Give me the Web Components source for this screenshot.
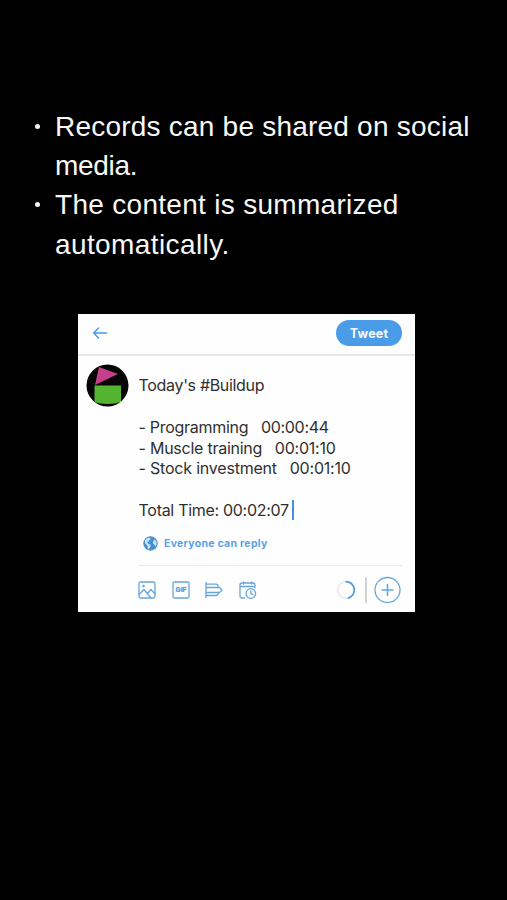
<!DOCTYPE html>
<html lang="en">
<head>
<meta charset="utf-8">
<title>Share records</title>
<style>
    body {
        margin: 0;
        background: #000;
    }
</style>
</head>
<body>
<share-page>
    <note-item slot="notes">
        <text-line ls="0.22">Records can be shared on social</text-line>
        <text-line ls="-0.3">media.</text-line>
    </note-item>
    <note-item slot="notes">
        <text-line ls="0.3">The content is summarized</text-line>
        <text-line ls="0.4">automatically.</text-line>
    </note-item>
    <tweet-card>
        <tweet-button slot="action">Tweet</tweet-button>
        <text-line ls="-0.33">Today's #Buildup</text-line>
        <text-line></text-line>
        <text-line ls="-0.29">- Programming   00:00:44</text-line>
        <text-line ls="-0.25">- Muscle training   00:01:10</text-line>
        <text-line ls="-0.21">- Stock investment   00:01:10</text-line>
        <text-line></text-line>
        <text-line ls="-0.3" caret>Total Time: 00:02:07</text-line>
        <reply-scope slot="scope">Everyone can reply</reply-scope>
        <tweet-tools slot="tools"></tweet-tools>
    </tweet-card>
</share-page>

<script>
class BaseElement extends HTMLElement {
    constructor () {
        super();
        const template = document.createElement('template');
        template.innerHTML = this.constructor.markup;
        this._shadowRoot = this.attachShadow({ mode: 'open' });
        this._shadowRoot.appendChild(template.content.cloneNode(true));
    }
}

class SharePage extends BaseElement {
    static markup = `
        <style>
            :host {
                display: flex;
                flex-direction: column;
                box-sizing: border-box;
                height: 900px;
                padding-top: 107px;
                background: #000;
                overflow: hidden;
            }
            .notes {
                height: 207px;
                box-sizing: border-box;
                padding-left: 33px;
            }
            .card {
                padding-left: 78px;
            }
        </style>
        <div class="notes"><slot name="notes"></slot></div>
        <div class="card"><slot></slot></div>
    `;
}
customElements.define('share-page', SharePage);

class NoteItem extends BaseElement {
    static markup = `
        <style>
            :host {
                display: flex;
                color: #f8f8f8;
                font: 28px/39.2px "Liberation Sans", Arial, sans-serif;
            }
            .dot {
                width: 5px;
                height: 5px;
                margin: 17px 15px 0 2px;
                border-radius: 50%;
                background: #f4f4f4;
                flex: none;
            }
        </style>
        <div class="dot"></div>
        <div><slot></slot></div>
    `;
}
customElements.define('note-item', NoteItem);

// one line of text, "ls" is its letter spacing in px
class TextLine extends BaseElement {
    static markup = `
        <style>
            :host {
                display: flex;
                align-items: center;
                height: 1lh;
                white-space: pre;
            }
            :host([caret])::after {
                content: "";
                width: 2px;
                height: 20px;
                margin-left: 3px;
                background: #4a8fdb;
            }
        </style>
        <span><slot></slot></span>
    `;

    connectedCallback () {
        this.style.letterSpacing = (this.getAttribute('ls') || 0) + 'px';
    }
}
customElements.define('text-line', TextLine);

class TweetCard extends BaseElement {
    static markup = `
        <style>
            :host {
                display: flex;
                flex-direction: column;
                box-sizing: border-box;
                width: 336.5px;
                height: 298px;
                background: #fefefe;
                color: #303030;
                font-family: Inter, "Liberation Sans", sans-serif;
            }
            header {
                display: flex;
                flex: none;
                align-items: center;
                justify-content: space-between;
                box-sizing: border-box;
                height: 42px;
                padding: 0 12.5px 2px 14px;
                border-bottom: 2px solid #e9e9ea;
            }
            main {
                display: flex;
                padding: 8px 13px 0 8px;
            }
            .avatar {
                flex: none;
                width: 43px;
                height: 43px;
            }
            .content {
                flex: 1;
                margin-left: 9px;
            }
            .text {
                padding: 11px 0 0 0.6px;
                font-size: 16px;
                line-height: 20.85px;
            }
        </style>
        <header>
            <svg width="16" height="16" viewBox="0 0 16 16" fill="none" stroke="#4b9be5" stroke-width="1.5" stroke-linecap="round" stroke-linejoin="round">
                <path d="M14.6 8H2M6.6 3L1.6 8l5 5"/>
            </svg>
            <slot name="action"></slot>
        </header>
        <main>
            <svg class="avatar" viewBox="0 0 43 43">
                <circle cx="21.5" cy="21.5" r="21" fill="#050505"/>
                <path d="M13 3L32 10L9 21z" fill="#c43f8c"/>
                <path d="M8.500 21.500H35V38Q29 40 21.500 40T8.500 38z" fill="#55b332"/>
            </svg>
            <div class="content">
                <div class="text"><slot></slot></div>
                <slot name="scope"></slot>
                <slot name="tools"></slot>
            </div>
        </main>
    `;
}
customElements.define('tweet-card', TweetCard);

class TweetButton extends BaseElement {
    static markup = `
        <style>
            :host {
                display: flex;
                align-items: center;
                justify-content: center;
                width: 66px;
                height: 26px;
                border-radius: 13px;
                background: #4a9ce9;
                color: #f5faff;
                font-size: 12.5px;
                font-weight: 700;
                letter-spacing: 0.2px;
            }
        </style>
        <slot></slot>
    `;
}
customElements.define('tweet-button', TweetButton);

class ReplyScope extends BaseElement {
    static markup = `
        <style>
            :host {
                display: flex;
                align-items: center;
                box-sizing: border-box;
                height: 45px;
                padding: 1px 0 0 5px;
                border-bottom: 1px solid #ededee;
                color: #5aa3e4;
                font-size: 10.5px;
                font-weight: 700;
                letter-spacing: 0.28px;
            }
            svg {
                margin-right: 6px;
            }
        </style>
        <svg width="15" height="15" viewBox="0 0 15 15">
            <circle cx="7.500" cy="7.500" r="7.200" fill="#468fd0"/>
            <path d="M2 4.500Q3.500 2 6 1.500L8 3L6.500 4L5.500 5L5.800 6L4 6.300L5.200 7.800L7.300 8.500L7.800 10.300L6.300 12.300L5.800 13.800L4.700 12L4.300 9.500L2 7.600z" fill="#c9e1f6"/>
            <path d="M10.300 4.800L12 3.500L13.500 6L13.500 8.500L12.300 10.500L11.200 8.500L9.800 7.200z" fill="#c9e1f6"/>
        </svg>
        <slot></slot>
    `;
}
customElements.define('reply-scope', ReplyScope);

class TweetTools extends BaseElement {
    static markup = `
        <style>
            :host {
                display: flex;
                align-items: center;
                height: 49px;
            }
            svg {
                flex: none;
                fill: none;
                stroke: #67a6dc;
                stroke-width: 1.3;
                stroke-linecap: round;
                stroke-linejoin: round;
            }
            .left {
                display: flex;
                gap: 15.6px;
                flex: 1;
            }
            .gif {
                font: 800 6.8px Inter, sans-serif;
                fill: #5b9dd8;
                stroke: #5b9dd8;
                stroke-width: 0.2;
            }
            .line {
                width: 1.5px;
                height: 26px;
                margin: 0 7px 0 9.500px;
                background: #d2d2d2;
            }
        </style>
        <div class="left">
            <svg width="18" height="18" viewBox="0 0 18 18">
                <rect x="1" y="1" width="16" height="16" rx="1.800"/>
                <path d="M1 13.500L6 8.500L12.500 16.500M9.500 12.500L13 8.500L17 13"/>
                <circle cx="5.500" cy="5" r="0.600"/>
            </svg>
            <svg width="18" height="18" viewBox="0 0 18 18">
                <rect x="1" y="1" width="16" height="16" rx="1.500"/>
                <text class="gif" x="9.100" y="11.300" text-anchor="middle">GIF</text>
            </svg>
            <svg width="18" height="18" viewBox="0 0 18 18">
                <path d="M1 1.500V16.500M1 3.200H11Q13 3.200 13 5V6.500M1 6.500H14.500L17 9L14.500 11.500H1M13 11.500V12.500Q13 14.500 11 14.500H1"/>
            </svg>
            <svg width="18" height="18" viewBox="0 0 18 18">
                <path d="M5.500 17H3Q1 17 1 15V4Q1 2 3 2H14Q16 2 16 4V6.500M1.300 5.500H15.800M4.500 0.800V3M12.500 0.800V3"/>
                <circle cx="11.800" cy="12.500" r="4.800"/>
                <path d="M11.800 9.800V12.700L14 13.500"/>
            </svg>
        </div>
        <svg width="20" height="20" viewBox="0 0 20 20" style="stroke-linecap: butt">
            <circle cx="10" cy="10" r="8.300" style="stroke: #e4e4e8"/>
            <path d="M9.500 1.700A8.300 8.300 0 0 1 11.800 18.100" style="stroke: #519cdc; stroke-width: 1.7"/>
        </svg>
        <div class="line"></div>
        <svg width="28" height="28" viewBox="0 0 28 28">
            <circle cx="13.500" cy="14" r="12.500"/>
            <path d="M13.500 8.500V19.500M8 14H19" style="stroke-width: 1.6"/>
        </svg>
    `;
}
customElements.define('tweet-tools', TweetTools);
</script>
</body>
</html>
